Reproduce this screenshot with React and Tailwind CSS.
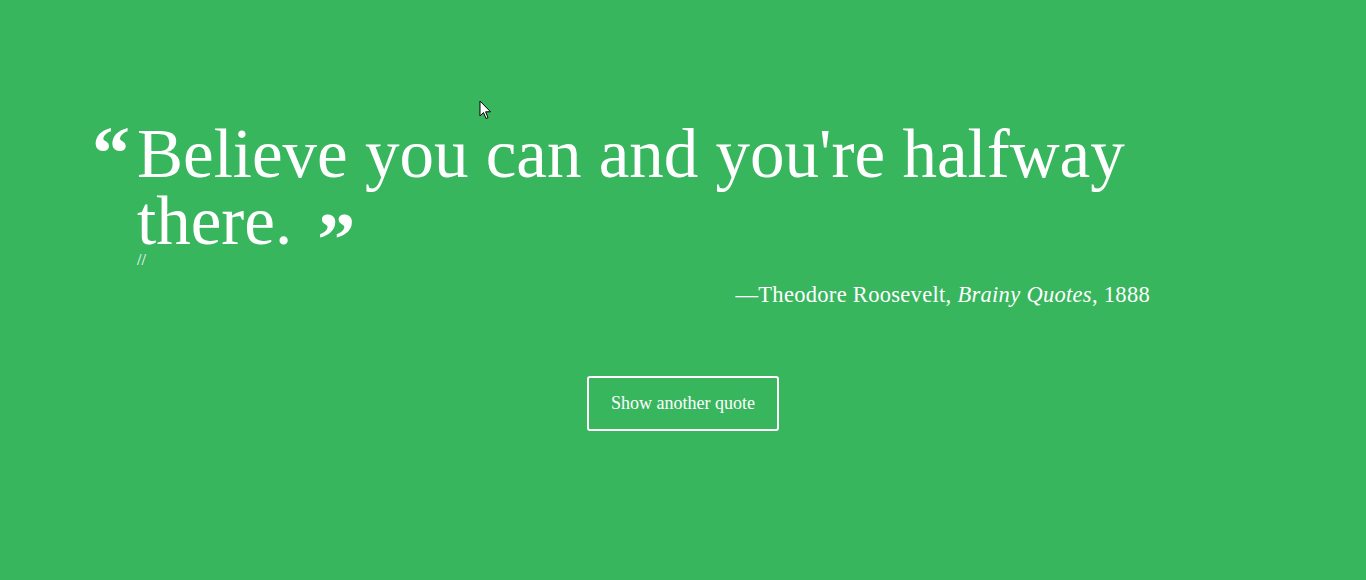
import React from "react"

const quote = {
  text: "Believe you can and you're halfway there.",
  author: "Theodore Roosevelt",
  source: "Brainy Quotes",
  year: "1888",
}

export default function App() {
  return (
    <div
      className="relative min-h-[580px] w-full bg-[#38b65e] text-white"
      style={{ fontFamily: '"Liberation Serif", "DejaVu Serif", serif' }}
    >
      {/* Quote */}
      <div className="pl-[92px] pt-[121px] w-[1150px]">
        <div className="flex">
          <span className="w-[45px] shrink-0 text-[76px] font-bold leading-[76px] -mt-[6px]">“</span>
          <p className="text-[69px] leading-[67px]">
            {quote.text}
            <span className="inline-block ml-[25px] text-[76px] font-bold leading-[0] relative top-[21px]">”</span>
          </p>
        </div>
        <div className="pl-[45px] text-[16px] leading-[10px]">//</div>
        <p className="text-right text-[22.5px] leading-[28px] tracking-[0.3px] mt-[16px]">
          —{quote.author}, <em>{quote.source}</em>, {quote.year}
        </p>
      </div>

      {/* Button */}
      <div className="flex justify-center mt-[67px]">
        <button className="w-[192px] h-[55px] border-2 border-white rounded-[3px] text-[18px] text-white">
          Show another quote
        </button>
      </div>

      {/* cursor */}
      <svg className="absolute left-[479px] top-[100px]" width="13" height="20" viewBox="0 0 13 20">
        <path d="M1 1 L1 16 L4.5 12.5 L7 18.5 L9 17.6 L6.6 11.8 L11.5 11.8 Z" fill="#fff" stroke="#000" strokeWidth="1" strokeLinejoin="round" />
      </svg>
    </div>
  )
}
